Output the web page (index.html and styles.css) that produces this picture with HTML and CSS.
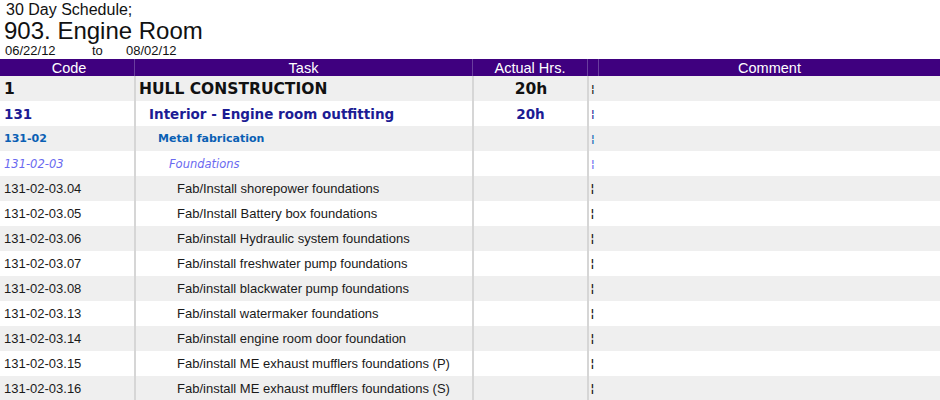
FILE: index.html
```html
<!DOCTYPE html>
<html>
<head>
<meta charset="utf-8">
<link rel="stylesheet" href="styles.css">
</head>
<body>
<div class="top">
  <div class="kicker">30 Day Schedule;</div>
  <h1 class="title">903. Engine Room</h1>
  <div class="dates"><span class="d1">06/22/12</span><span class="to">to</span><span>08/02/12</span></div>
</div>
<div class="sheet">
  <div class="row head">
    <div class="c code">Code</div>
    <div class="c task">Task</div>
    <div class="c hrs">Actual Hrs.</div>
    <div class="c nar"></div>
    <div class="c com">Comment</div>
  </div>
  <div class="row l1 alt">
    <div class="c code">1</div>
    <div class="c task">HULL CONSTRUCTION</div>
    <div class="c hrs">20h</div>
    <div class="c nar"><span class="frag">¦</span></div>
    <div class="c com"></div>
  </div>
  <div class="row l2">
    <div class="c code">131</div>
    <div class="c task">Interior - Engine room outfitting</div>
    <div class="c hrs">20h</div>
    <div class="c nar"><span class="frag">¦</span></div>
    <div class="c com"></div>
  </div>
  <div class="row l3 alt">
    <div class="c code">131-02</div>
    <div class="c task">Metal fabrication</div>
    <div class="c hrs"></div>
    <div class="c nar"><span class="frag">¦</span></div>
    <div class="c com"></div>
  </div>
  <div class="row l4">
    <div class="c code">131-02-03</div>
    <div class="c task">Foundations</div>
    <div class="c hrs"></div>
    <div class="c nar"><span class="frag">¦</span></div>
    <div class="c com"></div>
  </div>
  <div class="row l5 alt">
    <div class="c code">131-02-03.04</div>
    <div class="c task">Fab/Install shorepower foundations</div>
    <div class="c hrs"></div>
    <div class="c nar"><span class="frag">¦</span></div>
    <div class="c com"></div>
  </div>
  <div class="row l5">
    <div class="c code">131-02-03.05</div>
    <div class="c task">Fab/Install Battery box foundations</div>
    <div class="c hrs"></div>
    <div class="c nar"><span class="frag">¦</span></div>
    <div class="c com"></div>
  </div>
  <div class="row l5 alt">
    <div class="c code">131-02-03.06</div>
    <div class="c task">Fab/install Hydraulic system foundations</div>
    <div class="c hrs"></div>
    <div class="c nar"><span class="frag">¦</span></div>
    <div class="c com"></div>
  </div>
  <div class="row l5">
    <div class="c code">131-02-03.07</div>
    <div class="c task">Fab/install freshwater pump foundations</div>
    <div class="c hrs"></div>
    <div class="c nar"><span class="frag">¦</span></div>
    <div class="c com"></div>
  </div>
  <div class="row l5 alt">
    <div class="c code">131-02-03.08</div>
    <div class="c task">Fab/install blackwater pump foundations</div>
    <div class="c hrs"></div>
    <div class="c nar"><span class="frag">¦</span></div>
    <div class="c com"></div>
  </div>
  <div class="row l5">
    <div class="c code">131-02-03.13</div>
    <div class="c task">Fab/install watermaker foundations</div>
    <div class="c hrs"></div>
    <div class="c nar"><span class="frag">¦</span></div>
    <div class="c com"></div>
  </div>
  <div class="row l5 alt">
    <div class="c code">131-02-03.14</div>
    <div class="c task">Fab/install engine room door foundation</div>
    <div class="c hrs"></div>
    <div class="c nar"><span class="frag">¦</span></div>
    <div class="c com"></div>
  </div>
  <div class="row l5">
    <div class="c code">131-02-03.15</div>
    <div class="c task">Fab/install ME exhaust mufflers foundations (P)</div>
    <div class="c hrs"></div>
    <div class="c nar"><span class="frag">¦</span></div>
    <div class="c com"></div>
  </div>
  <div class="row l5 alt">
    <div class="c code">131-02-03.16</div>
    <div class="c task">Fab/install ME exhaust mufflers foundations (S)</div>
    <div class="c hrs"></div>
    <div class="c nar"><span class="frag">¦</span></div>
    <div class="c com"></div>
  </div>
</div>
</body>
</html>
```

FILE: styles.css
```css
html, body {
  margin: 0;
  padding: 0;
  background: #ffffff;
  overflow: hidden;
}
body {
  font-family: "Liberation Sans", Arial, sans-serif;
  color: #111;
  width: 940px;
  height: 400px;
}
.top {
  padding: 1px 0 0 6px;
  height: 59px;
  box-sizing: border-box;
}
.kicker {
  font-size: 16px;
  line-height: 17px;
  color: #111;
}
.title {
  margin: 0 0 0 -2px;
  font-weight: normal;
  font-size: 24px;
  line-height: 26px;
  color: #111;
}
.dates {
  margin-left: -1px;
  font-size: 13px;
  line-height: 14px;
  display: flex;
}
.dates .d1 { width: 87px; }
.dates .to { width: 34px; }

.sheet {
  width: 940px;
}
.row {
  display: grid;
  grid-template-columns: 134px 338px 115px 11px 1fr;
  height: 25px;
  align-items: stretch;
  background: #ffffff;
}
.row.alt { background: #efefef; }
.c {
  display: flex;
  align-items: center;
  overflow: hidden;
  white-space: nowrap;
  box-sizing: border-box;
}
.row .task, .row .hrs, .row .nar {
  border-left: 2px solid #d6d6d6;
}
.row .com { border-left: none; }

.row.head {
  height: 17px;
  background: #3f007f;
  color: #ffffff;
  font-size: 14.5px;
}
.row.head .c {
  justify-content: center;
  border-left: 1px solid #6a3d9e;
}
.row.head .code { border-left: none; }
.row.head .com { border-left: 1px solid #6a3d9e; }

.code { padding-left: 4px; }
.hrs { justify-content: center; }

.l1 { font-family: "DejaVu Sans", Verdana, sans-serif; font-weight: bold; font-size: 15.5px; color: #111; }
.l1 .task { padding-left: 3px; }
.l2 { font-family: "DejaVu Sans", Verdana, sans-serif; font-weight: bold; font-size: 13.5px; color: #1c1c94; }
.l2 .task { padding-left: 13px; }
.l3 { font-family: "DejaVu Sans", Verdana, sans-serif; font-weight: bold; font-size: 11px; color: #0a5fb4; }
.l3 .task { padding-left: 22px; }
.l4 { font-family: "DejaVu Sans", Verdana, sans-serif; font-style: italic; font-size: 11.5px; color: #6a6af0; }
.l4 .task { padding-left: 33px; }
.l5 { font-size: 13px; color: #1a1a1a; }
.l5 .task { padding-left: 41px; }

.l1 .hrs { padding-left: 1px; }
.nar { padding-left: 2px; }
.frag {
  font-size: 10px;
  line-height: 10px;
  font-weight: bold;
  font-style: normal;
}
```
